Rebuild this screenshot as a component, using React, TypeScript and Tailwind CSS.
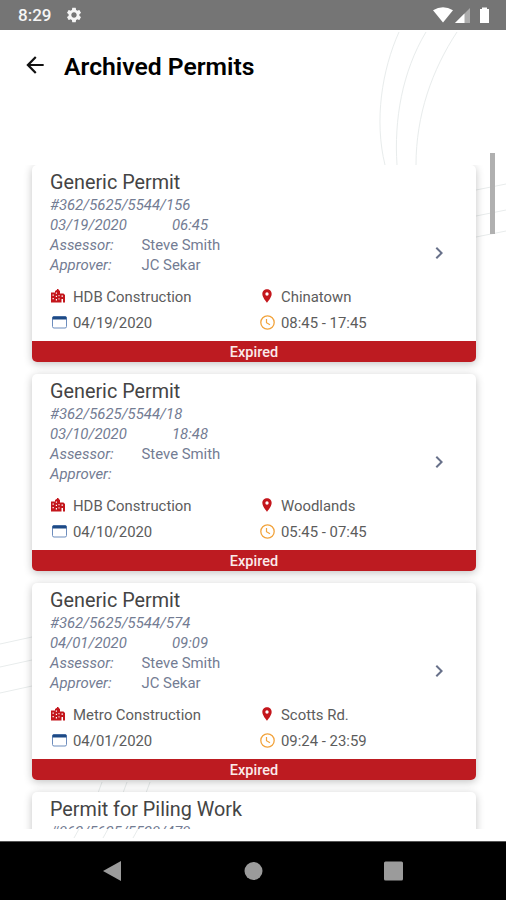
import type { ReactNode } from "react";
import { MdArrowBack, MdChevronRight, MdLocationOn, MdSettings } from "react-icons/md";

interface Permit {
  title: string;
  number: string;
  details?: {
    date: string;
    time: string;
    assessor: string;
    approver: string;
    company: string;
    location: string;
    expiry: string;
    hours: string;
  };
}

const permits: Permit[] = [
  {
    title: "Generic Permit",
    number: "#362/5625/5544/156",
    details: {
      date: "03/19/2020",
      time: "06:45",
      assessor: "Steve Smith",
      approver: "JC Sekar",
      company: "HDB Construction",
      location: "Chinatown",
      expiry: "04/19/2020",
      hours: "08:45 - 17:45",
    },
  },
  {
    title: "Generic Permit",
    number: "#362/5625/5544/18",
    details: {
      date: "03/10/2020",
      time: "18:48",
      assessor: "Steve Smith",
      approver: "",
      company: "HDB Construction",
      location: "Woodlands",
      expiry: "04/10/2020",
      hours: "05:45 - 07:45",
    },
  },
  {
    title: "Generic Permit",
    number: "#362/5625/5544/574",
    details: {
      date: "04/01/2020",
      time: "09:09",
      assessor: "Steve Smith",
      approver: "JC Sekar",
      company: "Metro Construction",
      location: "Scotts Rd.",
      expiry: "04/01/2020",
      hours: "09:24 - 23:59",
    },
  },
  {
    title: "Permit for Piling Work",
    number: "#362/5625/5523/473",
  },
];

function BuildingIcon() {
  return (
    <svg className="ml-px h-[14px] w-[15px]" viewBox="0 0 15 14" fill="#c4161c">
      <path
        fillRule="evenodd"
        d="M0 3.500h4V2L6 .8V0h1.500v.8L9 2v2.500h3.500L14 6v7.500h-2V10h-1.500v3.500H0zM1.500 5.500v1.200h1.300V5.500zm0 3.500v1.200h1.300V9zM4.800 3.500v1.300H6V3.500zm0 3.300V8H6V6.800zm0 3.200v1.500H6V10zM7.500 6v1.200h1V6zm0 3.200v1.200h1V9.200zM10.500 6.500v1.200H12V6.500z"
      />
    </svg>
  );
}

function CalendarIcon() {
  return (
    <svg className="ml-[2px] h-[13px] w-[15px]" viewBox="0 0 15 13">
      <rect x="0.500" y="0.500" width="14" height="11.500" rx="1.500" fill="#fff" stroke="#6d8dbd" />
      <path d="M0.500 3.500V1.500q0-1 1-1h12q1 0 1 1v2z" fill="#1d4a86" />
    </svg>
  );
}

function ClockIcon() {
  return (
    <svg className="ml-[2px] h-[15px] w-[15px]" viewBox="0 0 15 15" fill="none" stroke="#f2a33c">
      <circle cx="7.500" cy="7.500" r="6.700" strokeWidth="1.300" />
      <path d="M6.500 4v3.700l3.500 2" strokeWidth="1.200" />
    </svg>
  );
}

function Detail({ icon, children }: { icon: ReactNode; children: ReactNode }) {
  return (
    <div className="flex h-[26px] items-center">
      <span className="flex w-[23px] shrink-0 pb-[2px]">{icon}</span>
      {children}
    </div>
  );
}

function PermitCard({ permit }: { permit: Permit }) {
  const { title, number, details } = permit;

  return (
    <div
      className={`flex shrink-0 flex-col overflow-hidden rounded-[5px] bg-white shadow-[0_2px_8px_rgba(0,0,0,0.24)] ${
        details ? "h-[197px]" : "h-[60px]"
      }`}
    >
      <div className="flex-1 pl-[18px] pt-[6px]">
        <h2 className="h-6 text-[19.800px] leading-6 text-[#444]">{title}</h2>
        <div className="flex">
          <div className="w-[377px] text-[14.900px] leading-5 text-[#737c93]">
            <p className="italic">{number}</p>
            {details && (
              <>
                <p className="flex italic">
                  <span className="w-[122px]">{details.date}</span>
                  {details.time}
                </p>
                <p className="flex">
                  <span className="w-[91.500px] italic">Assessor:</span>
                  {details.assessor}
                </p>
                <p className="flex">
                  <span className="w-[91.500px] italic">Approver:</span>
                  {details.approver}
                </p>
              </>
            )}
          </div>
          {details && <MdChevronRight className="mt-[46px] size-6 text-[#68718a]" />}
        </div>
        {details && (
          <div className="mt-[9px] flex text-[14.900px] text-[#5c5c5c]">
            <div className="w-[208px]">
              <Detail icon={<BuildingIcon />}>{details.company}</Detail>
              <Detail icon={<CalendarIcon />}>{details.expiry}</Detail>
            </div>
            <div>
              <Detail icon={<MdLocationOn className="ml-px size-[16px] text-[#c4161c]" />}>{details.location}</Detail>
              <Detail icon={<ClockIcon />}>{details.hours}</Detail>
            </div>
          </div>
        )}
      </div>
      {details && (
        <div className="flex h-[21px] items-center justify-center bg-[#bd1b21] pt-[2px] text-[14.500px] font-medium text-[#fbeaea]">
          Expired
        </div>
      )}
    </div>
  );
}

function BackgroundLines() {
  return (
    <svg className="pointer-events-none absolute inset-0 h-full w-full" viewBox="0 30 506 811" fill="none" stroke="#e8ecec">
      <path d="M399 32C382 70 374 120 385 165M426 32C402 72 394 120 397 165M457 32C432 70 416 115 416 165" />
      <path d="M476 190l30-6M476 216l30-6M476 237l30-6" />
      <path d="M0 644l32-7M0 667l32-7M0 693l32-7" />
      <path d="M102 782l-4 11M127 782l-4 11M150 782l-4 11M79 829l-5 9M108 829l-5 9M138 829l-5 9" />
    </svg>
  );
}

function StatusBar() {
  return (
    <div className="flex h-[30px] shrink-0 items-center bg-[#757575] text-[#f5f5f5]">
      <span className="ml-[18px] w-[47px] pt-[2px] text-[17px] font-medium">8:29</span>
      <MdSettings className="size-[18px]" />
      <svg className="ml-auto mr-[15px] h-4 w-[58px]" viewBox="0 0 58 16" fill="#fff">
        <path d="M0 3.200Q10 -2.500 20 3.200L10 15.500z" />
        <path d="M37 1v15H22z" opacity=".4" />
        <path d="M31.500 6.500V16H22z" />
        <path d="M47 2h2V.500h5V2h2v14H47z" />
      </svg>
    </div>
  );
}

export default function App() {
  return (
    <div className="flex h-[900px] w-[506px] flex-col overflow-hidden bg-white font-[Roboto,sans-serif]">
      <StatusBar />
      <main className="relative flex h-[811px] shrink-0 flex-col">
        <BackgroundLines />
        <header className="relative flex h-[135px] shrink-0 items-start pl-[22px] pt-[22px]">
          <MdArrowBack className="size-[26px] text-[#111]" />
          <h1 className="ml-4 pt-px text-[24.700px] font-semibold leading-[28px] text-black">Archived Permits</h1>
        </header>
        <div className="relative flex h-[664px] flex-col gap-3 overflow-hidden pl-8 pr-[30px]">
          {permits.map((permit) => (
            <PermitCard key={permit.number} permit={permit} />
          ))}
        </div>
        <div className="absolute right-[11px] top-[123px] h-[81px] w-[5px] bg-[#b0b0b0]" />
      </main>
      <nav className="flex h-[59px] shrink-0 items-center border-t border-[#555] bg-black">
        <svg className="h-[22px] w-full" viewBox="0 0 506 22" fill="#9b9b9b">
          <path d="M103 11L121 1v20z" />
          <circle cx="253.500" cy="11" r="9" />
          <rect x="384" y="1.500" width="19" height="19" rx="1.500" />
        </svg>
      </nav>
    </div>
  );
}
